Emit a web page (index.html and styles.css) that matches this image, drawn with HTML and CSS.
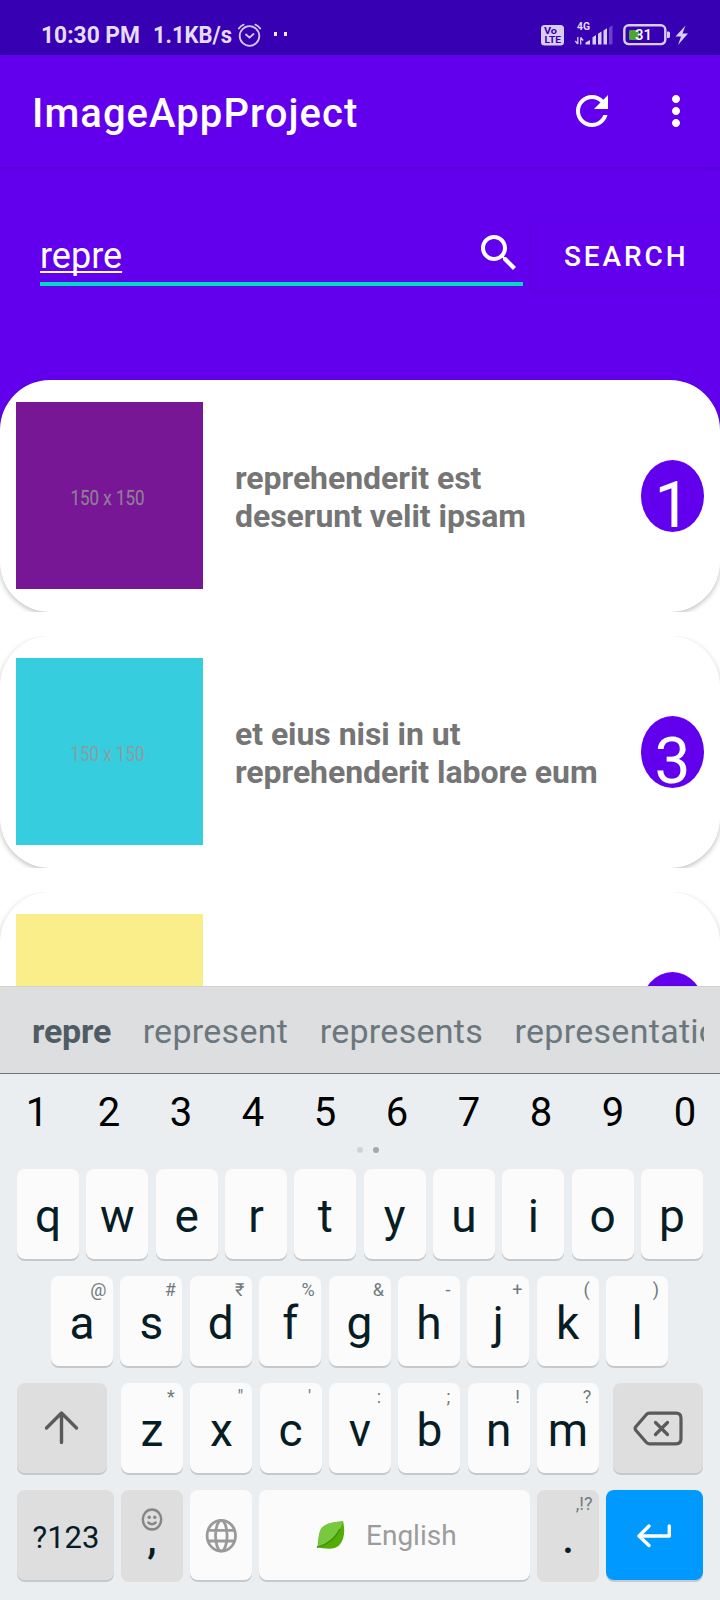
FILE: index.html
```html
<!DOCTYPE html>
<html lang="en">
<head>
<meta charset="utf-8">
<title>ImageAppProject</title>
<link rel="stylesheet" href="styles.css">
</head>
<body>
<div class="screen">
  <header class="status">
    <svg class="status-left" width="300" height="55" viewBox="0 0 300 55">
      <g fill="#e6dcf8" font-size="23" font-weight="700">
        <text x="41" y="43" textLength="99" lengthAdjust="spacingAndGlyphs">10:30 PM</text>
        <text x="153" y="43" textLength="79" lengthAdjust="spacingAndGlyphs">1.1KB/s</text>
      </g>
      <g fill="none" stroke="#d5c9f1" stroke-width="1.8" stroke-linecap="round" stroke-linejoin="round">
        <circle cx="249.5" cy="36" r="9.8"/>
        <path d="M246 34.5l3.5 3.2 4-3.7M238.8 28.6q2-3 4.8-4M260.2 28.6q-2-3-4.8-4"/>
      </g>
      <path d="M274 32h3v4h-3zM284 32h3v4h-3z" fill="#efe9fb"/>
    </svg>
    <svg width="155" height="55" viewBox="0 0 155 55">
      <rect x="1" y="25" width="23" height="20.5" rx="3.5" fill="#d9cef2"/>
      <g fill="#3700b3" font-weight="700">
        <text x="4" y="34" font-size="9" textLength="13" lengthAdjust="spacingAndGlyphs">Vo</text>
        <text x="4.500" y="43.200" font-size="9.500" textLength="16.500" lengthAdjust="spacingAndGlyphs">LTE</text>
      </g>
      <text x="37" y="30" font-size="10" font-weight="700" fill="#e6dcf8" textLength="13" lengthAdjust="spacingAndGlyphs">4G</text>
      <g fill="none" stroke="#d9cef2" stroke-width="1.3"><path d="M37.8 37v7M35.3 41l2.5 3M40.7 44.5v-7M43.2 40.500l-2.500-3"/></g>
      <path fill="#d9cef2" d="M45.500 44.500v-2l4.500-2.500v4.500zM52.500 37.300l3.500-2.300v9.500h-3.500zM58 33.800l3.500-2.300v13H58zM63.500 30.500l3.500-2.300v16.300h-3.500z"/>
      <path fill="#6b41c8" d="M69 27.500l3.500-2.300v19.300H69z"/>
      <rect x="84.300" y="25.300" width="41" height="18.800" rx="4.500" fill="none" stroke="#d9cef2" stroke-width="2.400"/>
      <rect x="89" y="30" width="10" height="10" rx="1.500" fill="#4fa52e"/>
      <path d="M127 31.500h1.500q1.500 0 1.500 1.500v3.500q0 1.500-1.500 1.500H127z" fill="#d9cef2"/>
      <text x="95" y="40.300" font-size="15.500" font-weight="500" fill="#fff" textLength="17" lengthAdjust="spacingAndGlyphs">31</text>
      <path d="M145.500 25.500L135.500 36.500h5.500l-3 8.500 10-11.500h-5.500z" fill="#d9cef2"/>
    </svg>
  </header>

  <div class="appbar">
    <h1>ImageAppProject</h1>
    <svg class="refresh" width="48" height="48" viewBox="0 0 24 24"><path fill="#fff" d="M17.65 6.350C16.200 4.900 14.210 4 12 4c-4.420 0-7.990 3.580-7.990 8s3.570 8 7.990 8c3.730 0 6.840-2.550 7.730-6h-2.080c-.82 2.330-3.040 4-5.650 4-3.310 0-6-2.690-6-6s2.690-6 6-6c1.660 0 3.140.69 4.220 1.780L13 11h7V4l-2.350 2.350z"/></svg>
    <svg class="more" width="48" height="48" viewBox="0 0 24 24"><path fill="#fff" d="M12 8c1.100 0 2-.9 2-2s-.9-2-2-2-2 .9-2 2 .9 2 2 2zm0 2c-1.100 0-2 .9-2 2s.9 2 2 2 2-.9 2-2-.9-2-2-2zm0 6c-1.100 0-2 .9-2 2s.9 2 2 2 2-.9 2-2-.9-2-2-2z"/></svg>
  </div>

  <div class="search">
    <div class="field">
      <span class="query">repre</span>
      <svg width="48" height="48" viewBox="0 0 24 24"><path fill="#fff" d="M15.500 14h-.79l-.28-.27C15.410 12.590 16 11.110 16 9.500 16 5.910 13.090 3 9.500 3S3 5.910 3 9.500 5.910 16 9.500 16c1.610 0 3.090-.59 4.230-1.570l.27.28v.79l5 4.990L20.490 19l-4.990-5zm-6 0C7.010 14 5 11.990 5 9.500S7.010 5 9.500 5 14 7.010 14 9.500 11.990 14 9.500 14z"/></svg>
    </div>
    <div class="button">SEARCH</div>
  </div>

  <main class="list">
    <div class="slot"><div class="card">
      <svg class="thumb purple" width="187" height="187"><text x="54.500" y="103" textLength="74" lengthAdjust="spacingAndGlyphs">150 x 150</text></svg>
      <p>reprehenderit est<br>deserunt velit ipsam</p><div class="badge">1</div>
    </div></div>
    <div class="slot"><div class="card">
      <svg class="thumb teal" width="187" height="187"><text x="54.500" y="103" textLength="74" lengthAdjust="spacingAndGlyphs">150 x 150</text></svg>
      <p>et eius nisi in ut<br>reprehenderit labore eum</p><div class="badge">3</div>
    </div></div>
    <div class="slot"><div class="card">
      <div class="thumb yellow"></div><p></p><div class="badge"></div>
    </div></div>
  </main>

  <section class="keyboard">
    <div class="suggestions"><div class="words"><b>repre</b><span>represent</span><span>represents</span><span>representation</span></div></div>
    <div class="numbers"><span>1</span><span>2</span><span>3</span><span>4</span><span>5</span><span>6</span><span>7</span><span>8</span><span>9</span><span>0</span></div>
    <div class="pager"><i></i><i class="on"></i></div>
    <div class="row">
      <div class="key">q</div><div class="key">w</div><div class="key">e</div><div class="key">r</div><div class="key">t</div><div class="key">y</div><div class="key">u</div><div class="key">i</div><div class="key">o</div><div class="key">p</div>
    </div>
    <div class="row inset">
      <div class="key">a<small>@</small></div><div class="key">s<small>#</small></div><div class="key">d<small>₹</small></div><div class="key">f<small>%</small></div><div class="key">g<small>&amp;</small></div><div class="key">h<small>-</small></div><div class="key">j<small>+</small></div><div class="key">k<small>(</small></div><div class="key">l<small>)</small></div>
    </div>
    <div class="row">
      <div class="key grey shift"><svg width="90" height="90" viewBox="0 0 90 90"><path d="M44.500 59.500V30M29.500 45l15-15 15 15" fill="none" stroke="#5a5a5a" stroke-width="3.400" stroke-linecap="round" stroke-linejoin="round"/></svg></div>
      <div class="letters">
        <div class="key">z<small>*</small></div><div class="key">x<small>"</small></div><div class="key">c<small>'</small></div><div class="key">v<small>:</small></div><div class="key">b<small>;</small></div><div class="key">n<small>!</small></div><div class="key">m<small>?</small></div>
      </div>
      <div class="key grey shift"><svg width="90" height="90" viewBox="0 0 90 90"><path d="M36.500 30.200H63q5 0 5 5v20.600q0 5-5 5H36.500q-2 0-3.300-1.500L22.800 47.200q-1.300-1.700 0-3.400L33.200 31.700q1.300-1.500 3.300-1.500zM42.500 39.500l12 12M54.500 39.500l-12 12" fill="none" stroke="#5a5a5a" stroke-width="3.200" stroke-linecap="round"/></svg></div>
    </div>
    <div class="row">
      <div class="key grey mode">?123</div>
      <div class="key grey flat comma"><svg width="62" height="92" viewBox="0 0 62 92"><g fill="none" stroke="#868686" stroke-width="2.400"><ellipse cx="31" cy="29.500" rx="9.200" ry="10"/><path d="M27.300 32.500q3.700 3.400 7.400 0" stroke-linecap="round"/></g><circle cx="28.200" cy="27.300" r="1.700" fill="#868686"/><circle cx="33.800" cy="27.300" r="1.700" fill="#868686"/></svg><em>,</em></div>
      <div class="key"><svg width="62" height="90" viewBox="0 0 62 90"><g fill="none" stroke="#9a9a9a" stroke-width="2.800"><ellipse cx="31.300" cy="45.700" rx="14.200" ry="15.400"/><ellipse cx="31.300" cy="45.700" rx="5.800" ry="15.400"/><path d="M18 40.300h26.600M18 51h26.600"/></g></svg></div>
      <div class="key space"><svg width="30" height="30" viewBox="0 0 30 30"><path d="M1 27.500C3 23 1.500 16 5 9 10 2 20 2.500 27 1c2 9 2 18-4 24.500C17 31 8 28 1 27.500z" fill="#54ad05"/><path d="M1 27.500C4 23 1.500 16 5 9 10 2 20 2.500 27 1 25 11 15 23 1 27.500z" fill="#78c93f"/><path d="M1 27.300C12 24.500 20 17 24 9" fill="none" stroke="#3f8d08" stroke-width="1.300"/></svg><span>English</span></div>
      <div class="key grey flat dot"><em>.</em><small>,!?</small></div>
      <div class="key enter"><svg width="97" height="90" viewBox="0 0 97 90"><path d="M63.300 36v10H33.500M43 36L33 46l10 9.500" fill="none" stroke="#fff" stroke-width="3.400" stroke-linecap="round" stroke-linejoin="round"/></svg></div>
    </div>
  </section>
</div>
</body>
</html>
```
FILE: styles.css
```css
* { box-sizing: border-box; }
body { margin: 0; background: #fff; font-family: Roboto, "Noto Sans", sans-serif; }
svg { display: block; flex: none; }
.screen { width: 720px; height: 1600px; overflow: hidden; display: flex; flex-direction: column; background: linear-gradient(#6200ee 496px, #fff 496px); }

.status { height: 55px; flex: none; display: flex; justify-content: space-between; background: #3700b3; padding-right: 25px; }

.appbar { height: 112px; flex: none; display: flex; align-items: center; padding: 0 20px 0 32px; background: #6200ee; box-shadow: 0 2px 4px rgba(0, 0, 0, .12); }
h1 { margin: 5px auto 0 0; font-size: 40px; font-weight: 500; line-height: 48px; letter-spacing: 1.05px; color: #fff; }
.refresh { margin-right: 36px; }

.search { height: 213px; flex: none; display: flex; align-items: flex-start; justify-content: space-between; padding: 52px 0 0 40px; }
.field { width: 483px; height: 67px; display: flex; justify-content: space-between; padding-top: 10px; border-bottom: 4px solid #03dac5; }
.query { font-size: 36px; line-height: 42px; margin-top: 6px; color: #fff; text-decoration: underline; text-decoration-thickness: 2px; text-underline-offset: 3px; text-decoration-skip-ink: none; }
.button { width: 189px; height: 72px; border-radius: 8px; line-height: 76px; padding-left: 33px; font-size: 28px; font-weight: 500; letter-spacing: 2.9px; color: #fff; box-shadow: 0 1px 4px rgba(0, 0, 0, .1); }

.list { flex: 1; min-height: 0; overflow: hidden; display: flex; flex-direction: column; gap: 24px; }
.slot { height: 232px; flex: none; overflow: hidden; }
.card { height: 232px; border-radius: 50px; background: #fff; box-shadow: 0 2px 5px rgba(0, 0, 0, .25); display: flex; align-items: center; padding: 0 16px; }
.thumb { width: 187px; height: 187px; flex: none; margin-top: -1px; }
.thumb text { font: 19.5px Roboto, sans-serif; fill: #969696; fill-opacity: .8; stroke: #969696; stroke-opacity: .4; stroke-width: .5px; }
.purple { background: #771796; }
.teal { background: #36cede; }
.yellow { background: #f9ee89; }
.card p { margin: 1px auto 0 32px; font-size: 32px; line-height: 38px; font-weight: 700; letter-spacing: -.06px; color: #757575; }
.badge { width: 63px; height: 72px; border-radius: 50%; background: #6200ee; color: #fff; font-size: 64px; line-height: 92px; text-align: center; }

.keyboard { height: 614px; flex: none; background: #ebeef1; }
.suggestions { height: 88px; padding: 0 16px; background: #dddee0; border-top: 1px solid #d0d2d4; border-bottom: 1px solid #737377; }
.words { height: 86px; display: flex; gap: 31.5px; overflow: hidden; padding-left: 16px; font-size: 34px; line-height: 88px; letter-spacing: .28px; color: #6b777c; }
.words b { color: #4f5c63; letter-spacing: -.2px; }
.numbers { height: 73px; display: grid; grid-template-columns: repeat(10, 72px); padding-left: 1px; text-align: center; font-size: 40px; line-height: 77px; color: #000; }
.pager { height: 22px; display: flex; justify-content: center; gap: 10px; padding-left: 8px; margin-left: 8px; }
.pager i { width: 6px; height: 6px; border-radius: 50%; background: #d0d3d5; }
.pager .on { background: #a5a8aa; }
.row { display: flex; justify-content: space-between; height: 92px; margin: 0 17px 15px; }
.row.inset { margin: 0 52px 15px 51px; }
.letters { width: 478px; display: flex; justify-content: space-between; }
.key { position: relative; width: 62px; height: 90px; flex: none; border-radius: 8px; background: #fbfbfb; box-shadow: 0 2px 0 #c6c9cc; font-size: 46px; line-height: 95px; text-align: center; color: #061d26; }
.key small { position: absolute; top: 2px; right: 6.5px; min-width: 11px; font-size: 18px; line-height: 24px; color: #6f7a7f; }
.grey { background: #dedede; }
.flat { height: 92px; box-shadow: none; }
.shift { width: 90px; }
.mode { width: 97px; padding-left: 1px; font-size: 31px; line-height: 95px; }
.comma em { position: absolute; left: 0; right: 0; top: 1px; }
.key em { font-style: normal; font-weight: 500; font-size: 42px; }
.space { width: 271px; display: flex; align-items: center; padding-left: 57px; }
.space span { margin-left: 20px; font-size: 28px; line-height: 90px; padding-top: 2px; color: #9c9c9c; }
.enter { width: 97px; background: #0099ff; }
```
